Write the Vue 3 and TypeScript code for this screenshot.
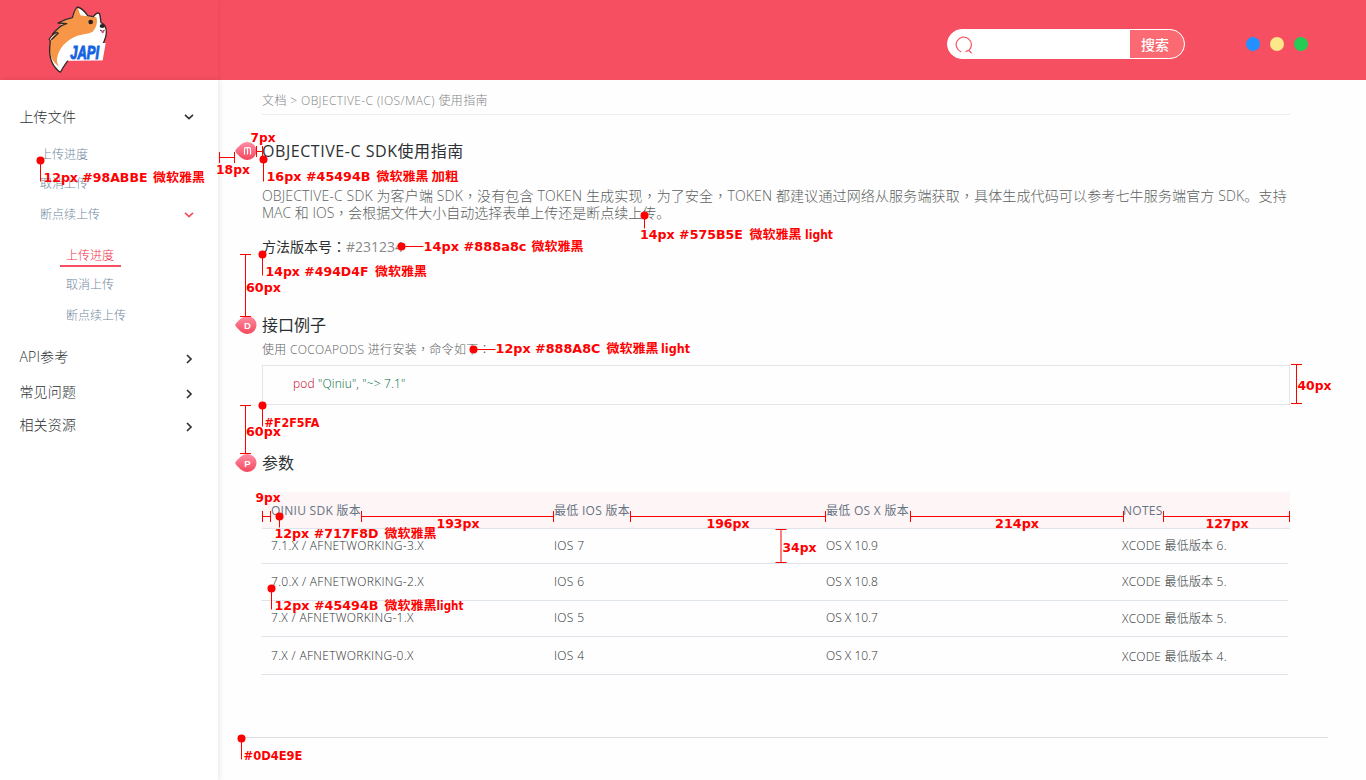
<script setup lang="ts">
interface NavItem {
  label: string
  level: 1 | 2 | 3
  gap: number
  arrow?: 'down' | 'right'
  active?: boolean
}

const nav: NavItem[] = [
  { label: '上传文件', level: 1, gap: 27, arrow: 'down' },
  { label: '上传进度', level: 2, gap: 18 },
  { label: '取消上传', level: 2, gap: 9 },
  { label: '断点续上传', level: 2, gap: 11, arrow: 'down' },
  { label: '上传进度', level: 3, gap: 21, active: true },
  { label: '取消上传', level: 3, gap: 8 },
  { label: '断点续上传', level: 3, gap: 11 },
  { label: 'API参考', level: 1, gap: 21, arrow: 'right' },
  { label: '常见问题', level: 1, gap: 15, arrow: 'right' },
  { label: '相关资源', level: 1, gap: 13, arrow: 'right' },
]

const intro: string[] = [
  'OBJECTIVE-C SDK 为客户端 SDK', '没有包含 TOKEN 生成实现', '为了安全',
  'TOKEN 都建议通过网络从服务端获取', '具体生成代码可以参考七牛服务端官方 SDK。支持',
]

const columns: string[] = ['QINIU SDK 版本', '最低 IOS 版本', '最低 OS X 版本', 'NOTES']
const rows: { cells: string[]; height: number }[] = [
  { cells: ['7.1.X / AFNETWORKING-3.X', 'IOS 7', 'OS X 10.9', 'XCODE 最低版本 6.'], height: 35 },
  { cells: ['7.0.X / AFNETWORKING-2.X', 'IOS 6', 'OS X 10.8', 'XCODE 最低版本 5.'], height: 37 },
  { cells: ['7.X / AFNETWORKING-1.X', 'IOS 5', 'OS X 10.7', 'XCODE 最低版本 5.'], height: 36 },
  { cells: ['7.X / AFNETWORKING-0.X', 'IOS 4', 'OS X 10.7', 'XCODE 最低版本 4.'], height: 38 },
]

// Design notes laid over the page: [text, x, baseline, width]
const notes: [string, number, number, number][] = [
  ['12px #98ABBE', 43.5, 182, 104], ['微软雅黑', 153, 182, 52],
  ['18px', 216, 174, 34],
  ['7px', 250.5, 142, 25],
  ['16px #45494B', 266.5, 181, 104], ['微软雅黑', 376.5, 181, 52], ['加粗', 431.5, 181, 27],
  ['14px #575B5E', 640, 239, 103], ['微软雅黑', 749.5, 239, 52], ['light', 805, 239, 28],
  ['14px #888a8c', 423.5, 251, 103], ['微软雅黑', 531.5, 251, 52],
  ['14px #494D4F', 265.5, 276, 103], ['微软雅黑', 375, 276, 52],
  ['60px', 246, 292, 35],
  ['12px #888A8C', 495.5, 353, 105], ['微软雅黑', 606.5, 353, 52], ['light', 661, 353, 29],
  ['40px', 1297.5, 390, 34],
  ['#F2F5FA', 264.5, 427, 55],
  ['60px', 246, 436, 35],
  ['9px', 255.5, 502, 25],
  ['12px #717F8D', 274.5, 538, 104], ['微软雅黑', 384.5, 538, 52],
  ['193px', 436.5, 528, 43], ['196px', 706.5, 528, 43], ['214px', 995, 528, 44], ['127px', 1205.5, 528, 43],
  ['34px', 782.5, 552, 34],
  ['12px #45494B', 274.5, 610, 104], ['微软雅黑', 384.5, 610, 52], ['light', 436.5, 610, 27],
  ['#0D4E9E', 243.5, 760, 59],
]

// Anchor dots with a leader line: [x, y, dx, dy]
const pins: [number, number, number, number][] = [
  [40.5, 160.5, 0, 21], [263.5, 159.5, 0, 22], [644.5, 215.5, 0, 13], [401.5, 246.5, 22, 0],
  [262.5, 254.5, 0, 21], [473.5, 349.5, 22, 0], [262.5, 405.5, 0, 21], [279.5, 516.5, 0, 11],
  [271.5, 588.5, 0, 21], [241.5, 738.5, 0, 21],
]

// Horizontal measures: [x1, x2, y]
const hBars: [number, number, number][] = [
  [219, 234, 157], [256, 262, 151], [262, 270, 516], [361, 553, 516],
  [630, 825, 516], [910, 1123, 516], [1163, 1289, 516],
]
// Vertical measures: [x, y1, y2]
const vBars: [number, number, number][] = [
  [245, 254, 316], [245, 405, 453], [1296, 364, 403], [780.5, 529, 562],
]
const hPath = ([a, b, y]: [number, number, number]): string =>
  `M${a + 0.5} ${y - 5}v11M${b + 0.5} ${y - 5}v11M${a} ${y + 0.5}H${b}`
const vPath = ([x, a, b]: [number, number, number]): string =>
  `M${x - 5} ${a + 0.5}h11M${x - 5} ${b + 0.5}h11M${x + 0.5} ${a}V${b}`
</script>

<template>
  <div class="page">
    <header class="top">
      <div class="brand">
        <svg class="logo" viewBox="0 0 240 240">
          <path d="M61 217 C42 203 27 178 29 143 L31 123 L29 117 C34 106 41 101 49 98 L41 101 C48 88 53 80 65 75 L58 68 C65 62 79 58 95 53 C101 40 104 25 113 21 C125 25 136 36 143 47 L160 50 C166 42 173 37 178 40 C182 50 181 58 183 68 C194 73 200 82 199 99 C198 113 193 121 190 130 L188 181 L84 182 C75 192 68 205 61 217Z" fill="#fff" />
          <path d="M57 200 C38 185 28 170 30 138 L32 120 C40 107 46 102 55 96 L43 101 C52 86 58 79 70 73 L60 69 C77 60 89 58 99 52 C102 36 107 25 113 22 L121 46 L138 48 L169 52 C174 66 169 83 158 95 C144 103 126 101 108 109 C79 122 56 144 51 176 C50 188 54 194 57 200Z" fill="#f79646" />
          <path d="M115 24 C127 29 136 39 140 47 L123 45Z M171 46 L177 42 L179 56Z" fill="#fff" />
          <path d="M61 217 C42 203 27 178 29 143 L31 123 L28 118 C34 105 43 101 51 97 L37 103 C47 91 56 82 66 76 L80 71 L54 69 C66 62 79 57 97 53 C101 40 104 25 113 21 C125 25 136 36 143 47 L160 50 C166 42 173 37 178 40 C182 50 181 58 183 68 C194 73 200 82 199 99 C198 113 193 121 190 130 M84 182 C75 192 68 205 61 217 M34 119 L56 98" fill="none" stroke="#332925" stroke-width="4" stroke-linejoin="round" />
          <circle cx="152" cy="66" r="7" fill="#271f20" />
          <ellipse cx="187" cy="78" rx="8" ry="6" fill="#2b2025" />
          <path d="M180 90 Q187 97 194 91" fill="none" stroke="#382528" stroke-width="3" />
          <path d="M183 94 L193 93 Q191 102 186 99Z" fill="#e64a82" />
          <path d="M97 129 L197 129 L188 181 L82 181Z" fill="#fff" />
          <text x="91" y="176" textLength="86" lengthAdjust="spacingAndGlyphs" class="logo-text">JAPI</text>
        </svg>
      </div>
      <div class="search">
        <div class="field">
          <svg width="18" height="18" viewBox="0 0 18 18">
            <path d="M6.2 15.8A7.6 7.6 0 1 1 14 14.2L10.6 15.6M13.4 14L16.7 17.3" fill="none" stroke="#f5606e" stroke-width="1.3" />
          </svg>
        </div>
        <div class="go">搜索</div>
      </div>
      <div class="dots"><i class="blue"></i><i class="yellow"></i><i class="green"></i></div>
    </header>

    <div class="body">
      <nav class="side">
        <div
          v-for="(n, i) in nav"
          :key="i"
          class="item"
          :class="['l' + n.level, { active: n.active }]"
          :style="{ marginTop: n.gap + 'px' }"
        >
          <span>{{ n.label }}</span>
          <svg v-if="n.arrow === 'down'" width="10" height="8" viewBox="0 0 10 8"><path d="M1 1.8L5 5.6L9 1.8" /></svg>
          <svg v-else-if="n.arrow" class="right" width="8" height="10" viewBox="0 0 8 10"><path d="M2 1L6 5L2 9" /></svg>
        </div>
      </nav>

      <main class="main">
        <div class="crumb">文档 &gt; OBJECTIVE-C (IOS/MAC) 使用指南</div>

        <section class="block first">
          <svg class="badge" viewBox="0 0 22 20">
            <defs>
              <linearGradient id="drop" x1="0" y1="0" x2="0" y2="1">
                <stop offset="0" stop-color="#ff8da3" />
                <stop offset="1" stop-color="#f4495f" />
              </linearGradient>
            </defs>
            <path d="M0.6 9C3 6 7 1 12.5 1a9 9 0 0 1 0 18C7 19 3 14 0.6 11Q0 10 0.6 9Z" fill="url(#drop)" />
            <path d="M9.5 13.5V8Q9.5 6.6 11 6.6H14Q15.5 6.6 15.5 8V13.5M12.5 6.6V13.5" fill="none" stroke="#fff" stroke-width="1.1" />
          </svg>
          <div>
            <h1 class="wide">OBJECTIVE-C SDK使用指南</h1>
            <p class="intro">
              <span class="line one"><template v-for="(part, i) in intro" :key="i"><i v-if="i" class="mid">，</i>{{ part }}</template></span>
              <span class="line two">MAC 和 IOS<i class="mid">，</i>会根据文件大小自动选择表单上传还是断点续上传。</span>
            </p>
            <p class="version">方法版本号<i class="mid">：</i><span>#231234</span></p>
          </div>
        </section>

        <section class="block second">
          <svg class="badge" viewBox="0 0 22 20">
            <path d="M0.6 9C3 6 7 1 12.5 1a9 9 0 0 1 0 18C7 19 3 14 0.6 11Q0 10 0.6 9Z" fill="url(#drop)" />
            <text x="12.5" y="13.5" class="mark">D</text>
          </svg>
          <div>
            <h1>接口例子</h1>
            <p class="hint">使用 COCOAPODS 进行安装<i class="mid">，</i>命令如下<i class="mid">：</i></p>
            <pre class="code"><b>pod</b> <em>"Qiniu"</em>, <em>"~&gt; 7.1"</em></pre>
          </div>
        </section>

        <section class="block third">
          <svg class="badge" viewBox="0 0 22 20">
            <path d="M0.6 9C3 6 7 1 12.5 1a9 9 0 0 1 0 18C7 19 3 14 0.6 11Q0 10 0.6 9Z" fill="url(#drop)" />
            <text x="12.5" y="13.5" class="mark">P</text>
          </svg>
          <div>
            <h1>参数</h1>
            <div class="table">
              <div class="tr head"><span v-for="c in columns" :key="c">{{ c }}</span></div>
              <div v-for="(r, i) in rows" :key="i" class="tr" :style="{ height: r.height + 'px' }">
                <span v-for="(c, j) in r.cells" :key="j">{{ c }}</span>
              </div>
            </div>
          </div>
        </section>
        <hr class="end" />
      </main>
    </div>

    <svg class="notes" width="1366" height="780" viewBox="0 0 1366 780">
      <path v-for="(b, i) in hBars" :key="'h' + i" :d="hPath(b)" />
      <path v-for="(b, i) in vBars" :key="'v' + i" :d="vPath(b)" />
      <g v-for="(p, i) in pins" :key="'p' + i">
        <path :d="`M${p[0]} ${p[1]}l${p[2]} ${p[3]}`" />
        <circle :cx="p[0]" :cy="p[1]" r="4" />
      </g>
      <text
        v-for="(n, i) in notes"
        :key="'n' + i"
        :x="n[1]"
        :y="n[2]"
        :textLength="n[3]"
        lengthAdjust="spacingAndGlyphs"
      >{{ n[0] }}</text>
    </svg>
  </div>
</template>

<style>
body {
  margin: 0;
  background: #fefefe;
}
</style>

<style scoped>
.page {
  position: relative;
  width: 1366px;
  height: 780px;
  overflow: hidden;
  display: flex;
  flex-direction: column;
  background: #fefefe;
  color: #2c3032;
  font-family: "Open Sans", "Noto Sans CJK SC", sans-serif;
  font-weight: 300;
  font-size: 12px;
}
.top {
  height: 80px;
  flex: none;
  display: flex;
  align-items: center;
  background: #f64f62;
}
.brand {
  width: 218px;
  height: 80px;
  box-sizing: border-box;
  padding-left: 40px;
  box-shadow: 1px 0 4px rgba(120, 30, 50, 0.1);
}
.logo {
  display: block;
  width: 80px;
  height: 80px;
}
.logo-text {
  font: italic 700 54px "Liberation Sans", sans-serif;
  fill: #1463e0;
  stroke: #1463e0;
  stroke-width: 3;
}
.search {
  margin-left: 729px;
  margin-top: 8px;
  width: 238px;
  height: 30px;
  box-sizing: border-box;
  display: flex;
  overflow: hidden;
  border: 1px solid #fff;
  border-radius: 15px;
  background: #fff;
}
.field {
  flex: 1;
  padding: 6px 0 0 7px;
}
.field svg {
  display: block;
}
.go {
  width: 54px;
  border-radius: 0 14px 14px 0;
  background: #fb6a72;
  color: #fff;
  font-size: 14px;
  font-weight: 500;
  line-height: 29px;
  text-indent: 11px;
}
.dots {
  display: flex;
  gap: 10px;
  margin: 8px 0 0 61px;
}
.dots i {
  width: 14px;
  height: 14px;
  border-radius: 50%;
}
.blue {
  background: #2390ff;
}
.yellow {
  background: #fce789;
}
.green {
  background: #24cb55;
}
.body {
  flex: 1;
  display: flex;
}
.side {
  width: 218px;
  flex: none;
  background: #fff;
  box-shadow: 1px 0 6px rgba(0, 0, 0, 0.1);
}
.item {
  display: flex;
  align-items: center;
  justify-content: space-between;
  height: 20px;
  line-height: 20px;
  padding: 0 24px 0 40px;
  color: #7289a1;
  white-space: nowrap;
}
.item svg {
  fill: none;
  stroke: #f64f62;
  stroke-width: 1.7;
}
.item.l1 {
  padding-left: 19.4px;
  font-size: 14px;
  letter-spacing: 0.2px;
  color: #2c3032;
}
.item.l1 svg {
  stroke: #333;
}
.item svg.right {
  margin: 3px 1px 0 0;
}
.item.l3 {
  padding-left: 66px;
}
.item.active {
  height: 19px;
  width: 49px;
  margin-left: 60px;
  padding: 0 6px;
  border-bottom: 2px solid #f64f62;
  color: #f23049;
}
.main {
  flex: 1;
  padding-left: 17px;
}
.crumb {
  width: 1028px;
  height: 20px;
  margin-left: 27px;
  padding: 11px 0 3px;
  line-height: 20px;
  border-bottom: 1px solid #eee;
  letter-spacing: 0.4px;
  color: #828486;
}
.block {
  display: grid;
  grid-template-columns: 22px 1028px;
  column-gap: 5px;
}
.badge {
  width: 22px;
  height: 20px;
  margin-top: 2px;
}
.mark {
  font: 700 9.5px "Liberation Sans", sans-serif;
  fill: #fff;
  text-anchor: middle;
}
.mid {
  font-family: "Noto Sans CJK TC", sans-serif;
  font-style: normal;
  line-height: 1;
}
h1 {
  margin: 0;
  height: 24px;
  line-height: 24px;
  font-size: 16px;
  font-weight: 400;
}
h1.wide {
  letter-spacing: 0.55px;
}
p {
  margin: 0;
}
.first {
  margin-top: 24px;
}
.second {
  margin-top: 56px;
}
.third {
  margin-top: 46px;
}
.intro {
  margin-top: 24px;
  font-size: 14px;
  line-height: 17px;
  color: #5c5e60;
}
.line {
  display: block;
  height: 17px;
  white-space: nowrap;
}
.line.one {
  letter-spacing: 0.145px;
}
.version {
  height: 20px;
  margin-top: 16px;
  font-size: 14px;
  line-height: 19px;
  font-weight: 400;
}
.version span {
  color: #888a8c;
}
.hint {
  height: 18px;
  margin-top: 4px;
  line-height: 17px;
  letter-spacing: 0.3px;
  color: #606264;
}
.code {
  box-sizing: border-box;
  height: 40px;
  margin: 6px 0 0;
  padding-left: 30px;
  border: 1px solid #e4e5e6;
  font: inherit;
  line-height: 36px;
  letter-spacing: 0.15px;
}
.code b {
  font-weight: 300;
  color: #c4001a;
}
.code em {
  font-style: normal;
  color: #006b38;
}
.table {
  margin-top: 17px;
}
.tr {
  box-sizing: border-box;
  width: 1027px;
  margin-left: -1px;
  padding: 0 0 2px 10px;
  display: grid;
  grid-template-columns: 283px 272px 296px 1fr;
  align-items: center;
  border-bottom: 1px solid #dfe3ea;
  letter-spacing: 0.2px;
}
.tr:last-child {
  padding-bottom: 0;
}
.tr span:first-child,
.tr span:nth-child(2) {
  letter-spacing: 0.32px;
}
.tr span:nth-child(3) {
  letter-spacing: 0;
}
.tr.head {
  width: 1028px;
  height: 37px;
  margin-left: 0;
  padding: 0 0 0 9px;
  background: #fef5f6;
  font-weight: 400;
  color: #667482;
}
.tr.head span:nth-child(n) {
  letter-spacing: 0.28px;
}
.tr.head span:last-child {
  padding-left: 1px;
}
.end {
  width: 1087px;
  height: 1px;
  margin: 62px 0 0 6px;
  border: 0;
  background: #dcdee3;
}
.notes {
  position: absolute;
  left: 0;
  top: 0;
  pointer-events: none;
}
.notes path {
  fill: none;
  stroke: #f00;
  stroke-width: 1;
}
.notes circle {
  fill: #f00;
}
.notes text {
  font: 700 12px "DejaVu Sans", "Noto Sans CJK SC", sans-serif;
  fill: #f00;
}
</style>
